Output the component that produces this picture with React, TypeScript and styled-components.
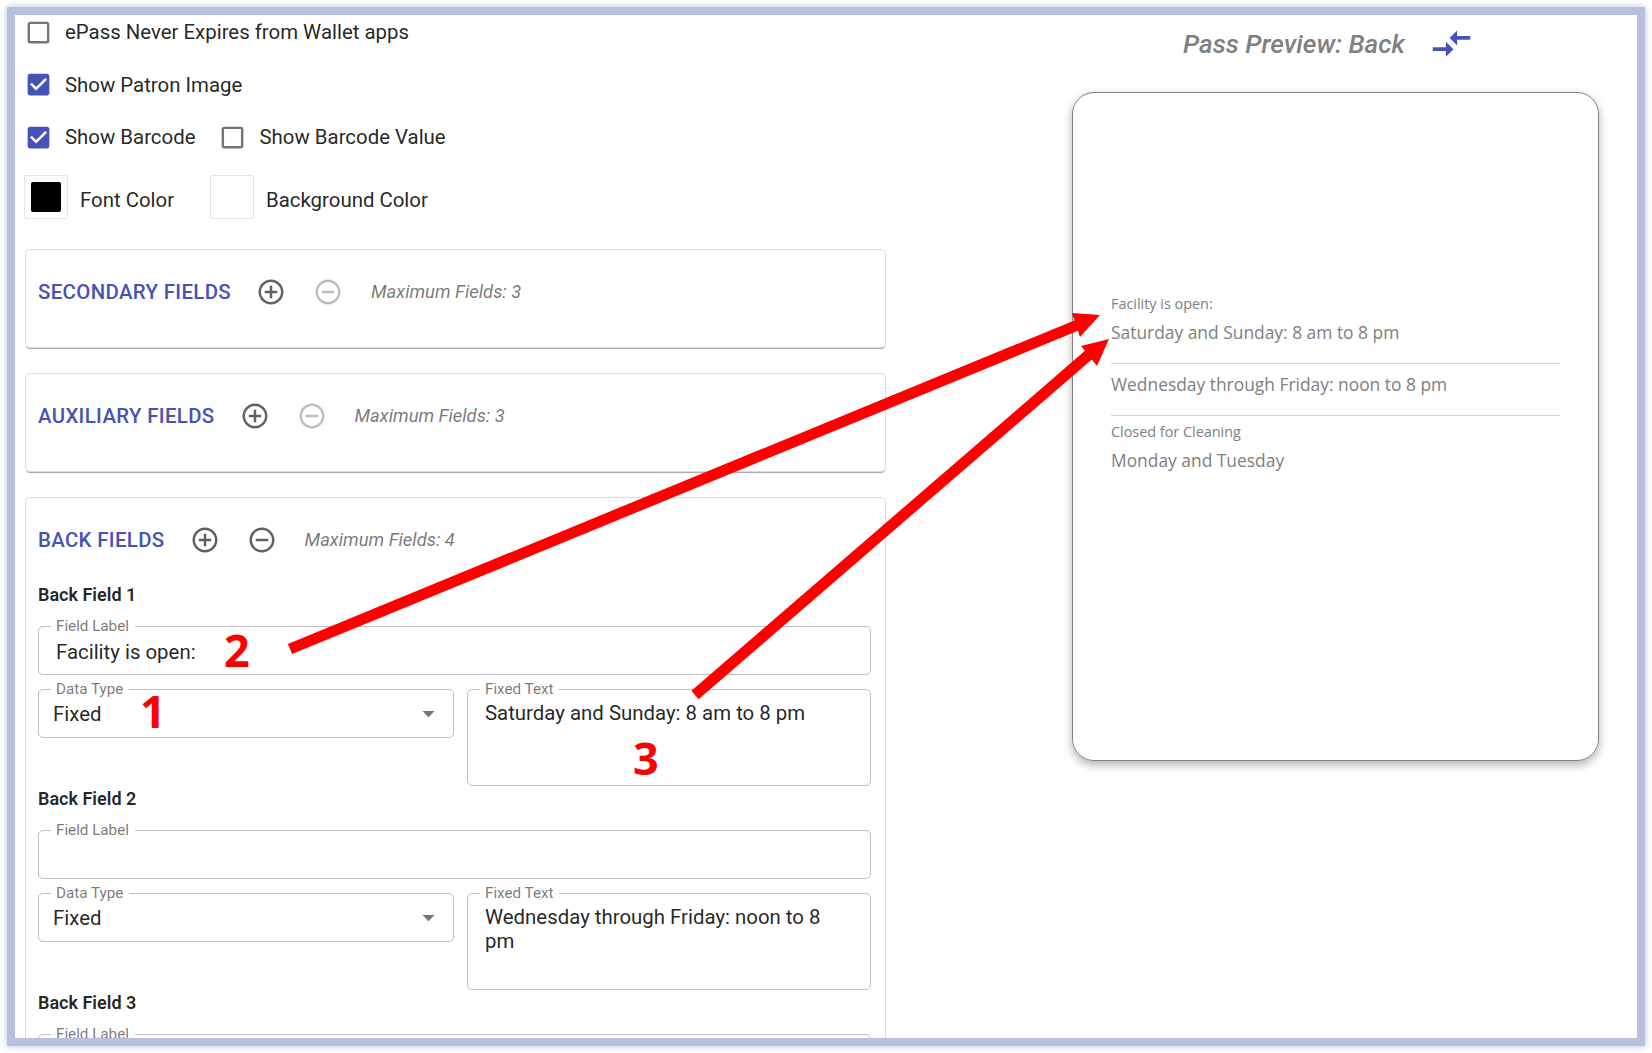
import styled, { createGlobalStyle } from 'styled-components';

const INDIGO = '#4752b8';
const TEXT = 'rgba(0, 0, 0, 0.87)';
const OUTLINE = '#c0c0c0';

const ICONS = {
  add: 'M13 7h-2v4H7v2h4v4h2v-4h4v-2h-4V7zm-1-5C6.48 2 2 6.48 2 12s4.48 10 10 10 10-4.48 10-10S17.52 2 12 2zm0 18c-4.41 0-8-3.59-8-8s3.59-8 8-8 8 3.59 8 8-3.59 8-8 8z',
  remove: 'M7 11v2h10v-2H7zm5-9C6.48 2 2 6.48 2 12s4.48 10 10 10 10-4.48 10-10S17.52 2 12 2zm0 18c-4.41 0-8-3.59-8-8s3.59-8 8-8 8 3.59 8 8-3.59 8-8 8z',
  checked: 'M19 3H5c-1.11 0-2 .9-2 2v14c0 1.1.89 2 2 2h14c1.11 0 2-.9 2-2V5c0-1.1-.89-2-2-2zm-9 14l-5-5 1.41-1.41L10 14.17l7.59-7.59L19 8l-9 9z',
  blank: 'M19 5v14H5V5h14m0-2H5c-1.1 0-2 .9-2 2v14c0 1.1.9 2 2 2h14c1.1 0 2-.9 2-2V5c0-1.1-.9-2-2-2z',
  compare: 'M9.01 14H2v2h7.01v3L13 15l-3.99-4v3zm5.98-1v-3H22V8h-7.01V5L11 9l3.99 4z',
  drop: 'M7 10l5 5 5-5z',
};

const GlobalStyle = createGlobalStyle`
  html, body {
    margin: 0;
    background: #fff;
  }
  body {
    font-family: Roboto, "Liberation Sans", sans-serif;
    font-size: 20.4px;
    color: ${TEXT};
  }
`;

const Page = styled.div`
  position: relative;
  width: 1652px;
  height: 1053px;
  padding: 7px;
  box-sizing: border-box;
`;

const Frame = styled.main`
  width: 1638px;
  height: 1039px;
  box-sizing: border-box;
  border: 8px solid #b9c0df;
  box-shadow: 0 0 7px #b9c0df;
  background: #fff;
  overflow: hidden;
  display: grid;
  grid-template-columns: 870px 1fr;
`;

const Editor = styled.section`
  padding-left: 10px;
`;

const OptionRow = styled.div`
  height: 34px;
  margin: 0 0 18.5px -1px;
  display: flex;
  align-items: center;
`;

const Option = styled.label`
  display: flex;
  align-items: center;
  gap: 12px;
  margin-right: 23px;
`;

const Icon = styled.svg<{ $size: number; $color: string }>`
  width: ${(p) => p.$size}px;
  height: ${(p) => p.$size}px;
  fill: ${(p) => p.$color};
  flex: none;
  display: block;
`;

const SwatchRow = styled.div`
  height: 44px;
  margin: 21px 0 30px -1px;
  display: flex;
`;

const SwatchItem = styled.div<{ $width: number }>`
  width: ${(p) => p.$width}px;
  display: flex;
  align-items: center;
  gap: 12px;
`;

const Swatch = styled.div<{ $color: string }>`
  width: 44px;
  height: 44px;
  box-sizing: border-box;
  border: 1px solid #e6e6e6;
  border-radius: 2px;
  padding: 6px;
  flex: none;

  &::before {
    content: '';
    display: block;
    width: 30px;
    height: 30px;
    border-radius: 2px;
    background: ${(p) => p.$color};
  }
`;

const SwatchLabel = styled.span`
  padding-top: 6px;
`;

const Card = styled.article<{ $height?: number }>`
  width: 861px;
  height: ${(p) => (p.$height ? `${p.$height}px` : 'auto')};
  box-sizing: border-box;
  margin-bottom: 25px;
  padding: 27px 12px 0;
  border: 1px solid #dcdcdc;
  border-radius: 5px;
  box-shadow: 0 2px 1px -1px rgba(0, 0, 0, 0.35);
`;

const FieldsHeader = styled.header`
  height: 30px;
  margin-bottom: 29px;
  display: flex;
  align-items: center;
`;

const FieldsTitle = styled.h2`
  margin: 0 25px 1px 0;
  font-size: 20.4px;
  font-weight: 500;
  letter-spacing: 0.35px;
  color: ${INDIGO};
`;

const RoundButton = styled.span`
  width: 30px;
  height: 30px;
  margin-right: 27px;
  flex: none;
`;

const MaxNote = styled.span`
  margin: 0 0 2px 1px;
  font-size: 18.4px;
  font-style: italic;
  color: rgba(0, 0, 0, 0.54);
`;

const FieldBlock = styled.div`
  margin-top: 2px;
`;

const FieldHeading = styled.h3`
  margin: 0 0 20px;
  height: 22px;
  line-height: 22px;
  font-size: 18px;
  font-weight: 600;
`;

const FieldGrid = styled.div`
  display: grid;
  grid-template-columns: 416px 404px;
  column-gap: 13px;
  row-gap: 14px;
  align-items: start;
`;

const Outlined = styled.div<{ $height: number; $padTop: number; $padLeft: number; $wide?: boolean }>`
  position: relative;
  grid-column: ${(p) => (p.$wide ? '1 / -1' : 'auto')};
  height: ${(p) => p.$height}px;
  box-sizing: border-box;
  padding: ${(p) => p.$padTop}px 20px 0 ${(p) => p.$padLeft}px;
  border: 1px solid ${OUTLINE};
  border-radius: 5px;
  line-height: 24px;
`;

const Legend = styled.span`
  position: absolute;
  top: -10px;
  left: 12px;
  padding: 0 6px 0 5px;
  background: #fff;
  font-size: 15.2px;
  line-height: 18px;
  color: rgba(0, 0, 0, 0.54);
`;

const DropArrow = styled.span`
  position: absolute;
  right: 10px;
  top: 9px;
`;

const Preview = styled.aside`
  padding-left: 187px;
`;

const PreviewHeader = styled.header`
  height: 57px;
  padding-left: 111px;
  box-sizing: border-box;
  display: flex;
  align-items: center;
  gap: 24px;
`;

const PreviewTitle = styled.h1`
  margin: 0;
  font-size: 26.2px;
  font-weight: 500;
  font-style: italic;
  color: #808080;
`;

const PassCard = styled.div`
  width: 527px;
  height: 669px;
  margin-top: 20px;
  box-sizing: border-box;
  padding: 202px 38px 0;
  border: 1px solid #808080;
  border-radius: 22px;
  box-shadow: 0 4px 10px rgba(0, 0, 0, 0.3);
  font-family: "Open Sans", sans-serif;
  color: #808080;
`;

const PassField = styled.div<{ $divider?: boolean }>`
  padding-bottom: 18px;
  margin-bottom: 7px;
  border-bottom: ${(p) => (p.$divider ? '1px solid #d4d4d4' : 'none')};
`;

const PassLabel = styled.div`
  margin-bottom: 6px;
  font-size: 14.4px;
  line-height: 18px;
`;

const PassValue = styled.div`
  font-size: 17.4px;
  line-height: 26px;
`;

const Annotations = styled.svg`
  position: absolute;
  inset: 0;
  width: 1652px;
  height: 1053px;
  pointer-events: none;
`;

const Callout = styled.span<{ $x: number; $y: number }>`
  position: absolute;
  left: ${(p) => p.$x}px;
  top: ${(p) => p.$y}px;
  font-family: "Open Sans", sans-serif;
  font-size: 45px;
  font-weight: 700;
  line-height: 50px;
  color: #ff0000;
`;

function Glyph({ path, size, color }: { path: string; size: number; color: string }) {
  return (
    <Icon viewBox='0 0 24 24' $size={size} $color={color}>
      <path d={path} />
    </Icon>
  );
}

function Check({ label, checked }: { label: string; checked?: boolean }) {
  return (
    <Option>
      <Glyph
        path={checked ? ICONS.checked : ICONS.blank}
        size={29}
        color={checked ? INDIGO : 'rgba(0, 0, 0, 0.54)'}
      />
      {label}
    </Option>
  );
}

function FieldsHead({ title, max, canRemove }: { title: string; max: number; canRemove?: boolean }) {
  return (
    <FieldsHeader>
      <FieldsTitle>{title}</FieldsTitle>
      <RoundButton>
        <Glyph path={ICONS.add} size={30} color='rgba(0, 0, 0, 0.62)' />
      </RoundButton>
      <RoundButton>
        <Glyph
          path={ICONS.remove}
          size={30}
          color={canRemove ? 'rgba(0, 0, 0, 0.62)' : 'rgba(0, 0, 0, 0.26)'}
        />
      </RoundButton>
      <MaxNote>Maximum Fields: {max}</MaxNote>
    </FieldsHeader>
  );
}

function BackField({ index, label, text }: { index: number; label: string; text: string }) {
  return (
    <FieldBlock>
      <FieldHeading>Back Field {index}</FieldHeading>
      <FieldGrid>
        <Outlined $wide $height={49} $padTop={13} $padLeft={17}>
          <Legend>Field Label</Legend>
          {label}
        </Outlined>
        <Outlined $height={49} $padTop={12} $padLeft={14}>
          <Legend>Data Type</Legend>
          Fixed
          <DropArrow>
            <Glyph path={ICONS.drop} size={29} color='rgba(0, 0, 0, 0.54)' />
          </DropArrow>
        </Outlined>
        <Outlined $height={97} $padTop={11} $padLeft={17}>
          <Legend>Fixed Text</Legend>
          {text}
        </Outlined>
      </FieldGrid>
    </FieldBlock>
  );
}

export default function App() {
  return (
    <Page>
      <GlobalStyle />
      <Frame>
        <Editor>
          <OptionRow>
            <Check label='ePass Never Expires from Wallet apps' />
          </OptionRow>
          <OptionRow>
            <Check label='Show Patron Image' checked />
          </OptionRow>
          <OptionRow>
            <Check label='Show Barcode' checked />
            <Check label='Show Barcode Value' />
          </OptionRow>
          <SwatchRow>
            <SwatchItem $width={186}>
              <Swatch $color='#000' />
              <SwatchLabel>Font Color</SwatchLabel>
            </SwatchItem>
            <SwatchItem $width={260}>
              <Swatch $color='#fff' />
              <SwatchLabel>Background Color</SwatchLabel>
            </SwatchItem>
          </SwatchRow>
          <Card $height={99}>
            <FieldsHead title='SECONDARY FIELDS' max={3} />
          </Card>
          <Card $height={99}>
            <FieldsHead title='AUXILIARY FIELDS' max={3} />
          </Card>
          <Card>
            <FieldsHead title='BACK FIELDS' max={4} canRemove />
            <BackField index={1} label='Facility is open:' text='Saturday and Sunday: 8 am to 8 pm' />
            <BackField index={2} label='' text='Wednesday through Friday: noon to 8 pm' />
            <BackField index={3} label='' text='' />
          </Card>
        </Editor>
        <Preview>
          <PreviewHeader>
            <PreviewTitle>Pass Preview: Back</PreviewTitle>
            <Glyph path={ICONS.compare} size={45} color={INDIGO} />
          </PreviewHeader>
          <PassCard>
            <PassField $divider>
              <PassLabel>Facility is open:</PassLabel>
              <PassValue>Saturday and Sunday: 8 am to 8 pm</PassValue>
            </PassField>
            <PassField $divider>
              <PassValue>Wednesday through Friday: noon to 8 pm</PassValue>
            </PassField>
            <PassField>
              <PassLabel>Closed for Cleaning</PassLabel>
              <PassValue>Monday and Tuesday</PassValue>
            </PassField>
          </PassCard>
        </Preview>
      </Frame>
      <Annotations viewBox='0 0 1652 1053'>
        <line x1='290' y1='649' x2='1085' y2='322' stroke='#ff0000' strokeWidth='11' />
        <polygon points='1100,315 1072,313 1080,337' fill='#ff0000' />
        <line x1='695' y1='695' x2='1092' y2='352' stroke='#ff0000' strokeWidth='11' />
        <polygon points='1109,339 1081,346 1097,366' fill='#ff0000' />
      </Annotations>
      <Callout $x={224} $y={625}>2</Callout>
      <Callout $x={140} $y={686}>1</Callout>
      <Callout $x={633} $y={733}>3</Callout>
    </Page>
  );
}
